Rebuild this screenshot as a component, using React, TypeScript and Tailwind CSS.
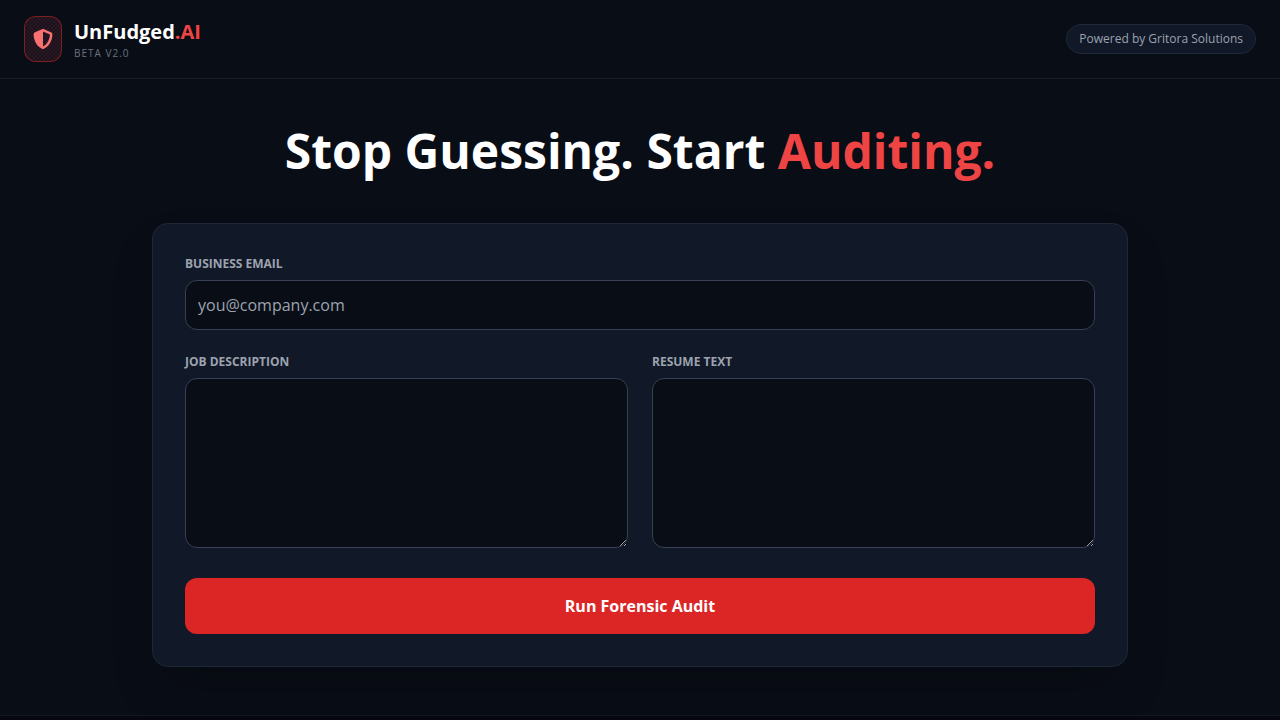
import { FaShieldHalved } from "react-icons/fa6";

const labelClass = "mb-2 block text-xs font-bold uppercase text-[#9ca3af]";
const fieldClass =
  "w-full rounded-xl border border-[#374151] bg-[#090d16] p-3 text-base text-white placeholder:text-[#9ca3af] focus:border-[#ef4444] focus:outline-none";

function Header() {
  return (
    <header className="flex items-center justify-between border-b border-[#1f2937]/60 px-6 py-4">
      <div className="flex items-center gap-3">
        <div className="flex h-[46px] items-center rounded-xl border border-[#dc2626]/50 bg-[#0f1420] bg-[radial-gradient(circle_at_1px_1px,#35161f_1px,transparent_1px),radial-gradient(circle_at_3px_3px,#35161f_1px,transparent_1px)] bg-[length:4px_4px] px-2">
          <FaShieldHalved className="size-5 text-[#f87171]" aria-hidden="true" />
        </div>
        <div>
          <p className="text-xl font-bold text-white">
            UnFudged<span className="text-[#ef4444]">.AI</span>
          </p>
          <p className="text-[10px] leading-[15px] tracking-widest text-[#6b7280]">BETA V2.0</p>
        </div>
      </div>
      <div className="rounded-full border border-[#1f2937] bg-[#111827] px-3 py-1.5 text-xs text-[#9ca3af]">
        Powered by Gritora Solutions
      </div>
    </header>
  );
}

function AuditForm() {
  return (
    <form
      className="rounded-2xl border border-[#1f2937] bg-[#111827] p-8 shadow-[0_25px_50px_-12px_rgb(0_0_0/0.25)]"
      onSubmit={(event) => event.preventDefault()}
    >
      <div className="mb-6">
        <label htmlFor="email" className={labelClass}>
          Business Email
        </label>
        <input id="email" type="email" placeholder="you@company.com" className={fieldClass} />
      </div>
      <div className="mb-[30px] grid grid-cols-1 gap-6 md:grid-cols-2">
        <div>
          <label htmlFor="job" className={labelClass}>
            Job Description
          </label>
          <textarea id="job" rows={6} className={`block ${fieldClass}`} />
        </div>
        <div>
          <label htmlFor="resume" className={labelClass}>
            Resume Text
          </label>
          <textarea id="resume" rows={6} className={`block ${fieldClass}`} />
        </div>
      </div>
      <button
        type="submit"
        className="w-full rounded-xl bg-[#dc2626] py-4 font-bold text-white hover:bg-[#ef4444]"
      >
        Run Forensic Audit
      </button>
    </form>
  );
}

export default function App() {
  return (
    <div className="flex min-h-screen flex-col bg-[#090d16] font-['Open_Sans',sans-serif] text-[#e5e7eb]">
      <Header />
      <main className="mx-auto w-full max-w-5xl px-6 py-12">
        <h1 className="mb-12 text-center text-5xl leading-none font-bold text-white">
          Stop Guessing. Start <span className="text-[#ef4444]">Auditing.</span>
        </h1>
        <AuditForm />
      </main>
      <footer className="grow border-t border-[#1f2937]/50 bg-[#06070f]" />
    </div>
  );
}
